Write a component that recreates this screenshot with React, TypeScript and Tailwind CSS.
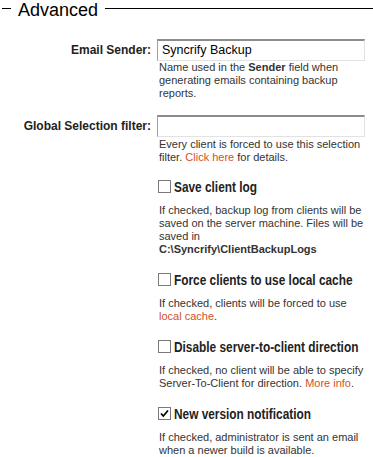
import type { ReactNode } from "react";

const LINK = "text-[#d4502a]";

const Desc = ({ children }: { children: ReactNode }) => (
  <p className="pl-[2px] text-[11px] leading-[13px] text-[#333]">{children}</p>
);

const FieldRow = ({ label, value, children }: { label: string; value?: string; children: ReactNode }) => (
  <div className="grid grid-cols-[157px_208px]">
    <div className="flex h-[22px] items-center justify-end pr-[6px] text-[12px] font-bold text-[#222]">{label}</div>
    <div>
      <div className="flex h-[22px] items-center border-t-2 border-l border-t-[#8c8c8c] border-l-[#a0a0a0] border-r border-b border-r-[#e2e2e2] border-b-[#e2e2e2] bg-white px-[4px] text-[12.5px] text-black">
        {value}
      </div>
      {children}
    </div>
  </div>
);

const Box = ({ checked }: { checked?: boolean }) => (
  <span className="flex h-[13px] w-[13px] shrink-0 items-center justify-center border border-[#7a7a7a] bg-white">
    {checked && (
      <svg viewBox="0 0 11 11" className="h-[11px] w-[11px]">
        <path d="M2 5.5 L4.3 8 L9 2.5" fill="none" stroke="#000" strokeWidth="1.8" />
      </svg>
    )}
  </span>
);

const CheckRow = ({ label, checked, children }: { label: string; checked?: boolean; children: ReactNode }) => (
  <div className="grid grid-cols-[157px_208px]">
    <div />
    <div>
      <div className="flex h-[17px] items-center gap-[3px] pl-[1px]">
        <Box checked={checked} />
        <span className="origin-left scale-x-[0.79] whitespace-nowrap text-[15px] font-bold leading-[17px] text-[#222]">
          {label}
        </span>
      </div>
      <div className="mt-[9px]">{children}</div>
    </div>
  </div>
);

export default function App() {
  return (
    <div className="h-[457px] w-[373px] overflow-hidden bg-white font-['Liberation_Sans',Arial,sans-serif]">
      <div className="flex h-[20px] items-start">
        <span className="ml-[2px] mt-[8px] h-px w-[9px] bg-black" />
        <span className="px-[7px] text-[18px] leading-[20px] text-black">Advanced</span>
        <span className="mt-[8px] h-px flex-1 bg-black" />
      </div>

      <div className="mt-[19px]">
        <FieldRow label="Email Sender:" value="Syncrify Backup">
          <Desc>
            Name used in the <b>Sender</b> field when generating emails containing backup reports.
          </Desc>
        </FieldRow>
      </div>

      <div className="mt-[15px]">
        <FieldRow label="Global Selection filter:">
          <div className="mt-[1px]">
            <Desc>
              Every client is forced to use this selection filter. <span className={LINK}>Click here</span> for
              details.
            </Desc>
          </div>
        </FieldRow>
      </div>

      <div className="mt-[14px] flex flex-col gap-[15px]">
        <CheckRow label="Save client log">
          <Desc>
            If checked, backup log from clients will be saved on the server machine. Files will be saved in
            <br />
            <b>C:\Syncrify\ClientBackupLogs</b>
          </Desc>
        </CheckRow>
        <CheckRow label="Force clients to use local cache">
          <Desc>
            If checked, clients will be forced to use <span className={LINK}>local cache</span>.
          </Desc>
        </CheckRow>
        <CheckRow label="Disable server-to-client direction">
          <Desc>
            If checked, no client will be able to specify Server-To-Client for direction.{" "}
            <span className={LINK}>More info</span>.
          </Desc>
        </CheckRow>
        <CheckRow label="New version notification" checked>
          <Desc>If checked, administrator is sent an email when a newer build is available.</Desc>
        </CheckRow>
      </div>
    </div>
  );
}
